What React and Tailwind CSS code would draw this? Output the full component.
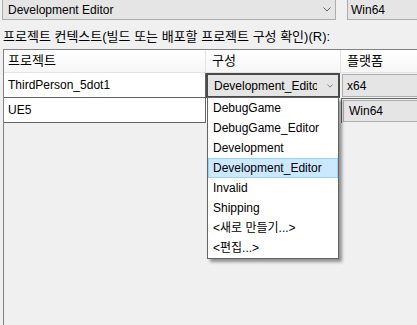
import React from "react";

const FONT = { fontFamily: '"Liberation Sans", "Noto Sans CJK KR", sans-serif' };

function Chevron({ w = 8, h = 5 }) {
  return (
    <svg width={w} height={h} viewBox="0 0 8 5" className="shrink-0">
      <polyline points="0.5,0.5 4,4 7.5,0.5" fill="none" stroke="#606060" strokeWidth="1" />
    </svg>
  );
}

const items = [
  "DebugGame",
  "DebugGame_Editor",
  "Development",
  "Development_Editor",
  "Invalid",
  "Shipping",
  "<새로 만들기...>",
  "<편집...>",
];

export default function App() {
  return (
    <div
      className="relative w-[417px] h-[325px] bg-[#f0f0f0] overflow-hidden text-[12px] text-black flex flex-col"
      style={FONT}
    >
      {/* top bar */}
      <div className="flex h-[20px] shrink-0">
        <div className="ml-[2px] w-[334px] h-[20px] border border-t-0 border-[#adadad] bg-[#e5e5e5] flex items-center justify-between pl-[5px] pr-[4px]">
          <span className="leading-[18px]">Development Editor</span>
          <Chevron />
        </div>
        <div className="ml-[11px] flex-1 h-[20px] border border-t-0 border-r-0 border-[#adadad] bg-[#e5e5e5] flex items-center pl-[3px]">
          <span className="leading-[18px]">Win64</span>
        </div>
      </div>

      {/* label */}
      <div className="mt-[9px] pl-[3px] h-[16px] leading-[16px] whitespace-nowrap text-[13px]">
        프로젝트 컨텍스트(빌드 또는 배포할 프로젝트 구성 확인)(R):
      </div>

      {/* table */}
      <div className="mt-[4px] ml-[3px] flex-1 border-l border-t border-[#828282] flex flex-col">
        {/* header */}
        <div className="flex h-[23px] bg-gradient-to-b from-white to-[#f6f6f6] border-b border-[#e3e3e3] text-[13px]">
          <div className="w-[202px] border-r border-[#e3e3e3] pl-[4px] flex items-center">프로젝트</div>
          <div className="w-[135px] border-r border-[#e3e3e3] pl-[6px] flex items-center">구성</div>
          <div className="flex-1 pl-[6px] flex items-center">플랫폼</div>
        </div>
        {/* row 1 */}
        <div className="flex h-[25px]">
          <div className="w-[202px] bg-white border-r border-b border-[#646464] pl-[4px] flex items-center">
            ThirdPerson_5dot1
          </div>
          <div className="w-[134px] h-[25px] border-2 border-[#4a4a4a] bg-[#e5e5e5] flex items-center justify-between pl-[6px] pr-[5px]">
            <span className="overflow-hidden whitespace-nowrap w-[103px]">Development_Editor</span>
            <Chevron w={6} h={4} />
          </div>
          <div className="flex-1 ml-[2px] mt-[1px] h-[23px] border border-r-0 border-[#adadad] bg-[#e5e5e5] flex items-center pl-[4px]">
            x64
          </div>
        </div>
        {/* row 2 */}
        <div className="flex h-[25px]">
          <div className="w-[202px] bg-white border-r border-b border-[#646464] pl-[4px] flex items-center">
            UE5
          </div>
          <div className="w-[135px] bg-white"></div>
          <div className="flex-1 border-l border-t border-[#646464] pl-[1px] pt-[1px]">
            <div className="h-[22px] border border-r-0 border-[#adadad] bg-[#e5e5e5] flex items-center pl-[5px]">
              Win64
            </div>
          </div>
        </div>
      </div>

      {/* dropdown list */}
      <div className="absolute left-[207px] top-[97px] w-[132px] bg-white border border-[#646464] shadow-[3px_3px_3px_rgba(0,0,0,0.4)] flex flex-col">
        {items.map((t) =>
          t === "Development_Editor" ? (
            <div
              key={t}
              className="h-[20px] bg-[#cce8ff] border border-[#99d1ff] pl-[4px] flex items-center whitespace-nowrap"
            >
              {t}
            </div>
          ) : (
            <div key={t} className="h-[20px] pl-[5px] flex items-center whitespace-nowrap">
              {t}
            </div>
          )
        )}
      </div>
    </div>
  );
}
